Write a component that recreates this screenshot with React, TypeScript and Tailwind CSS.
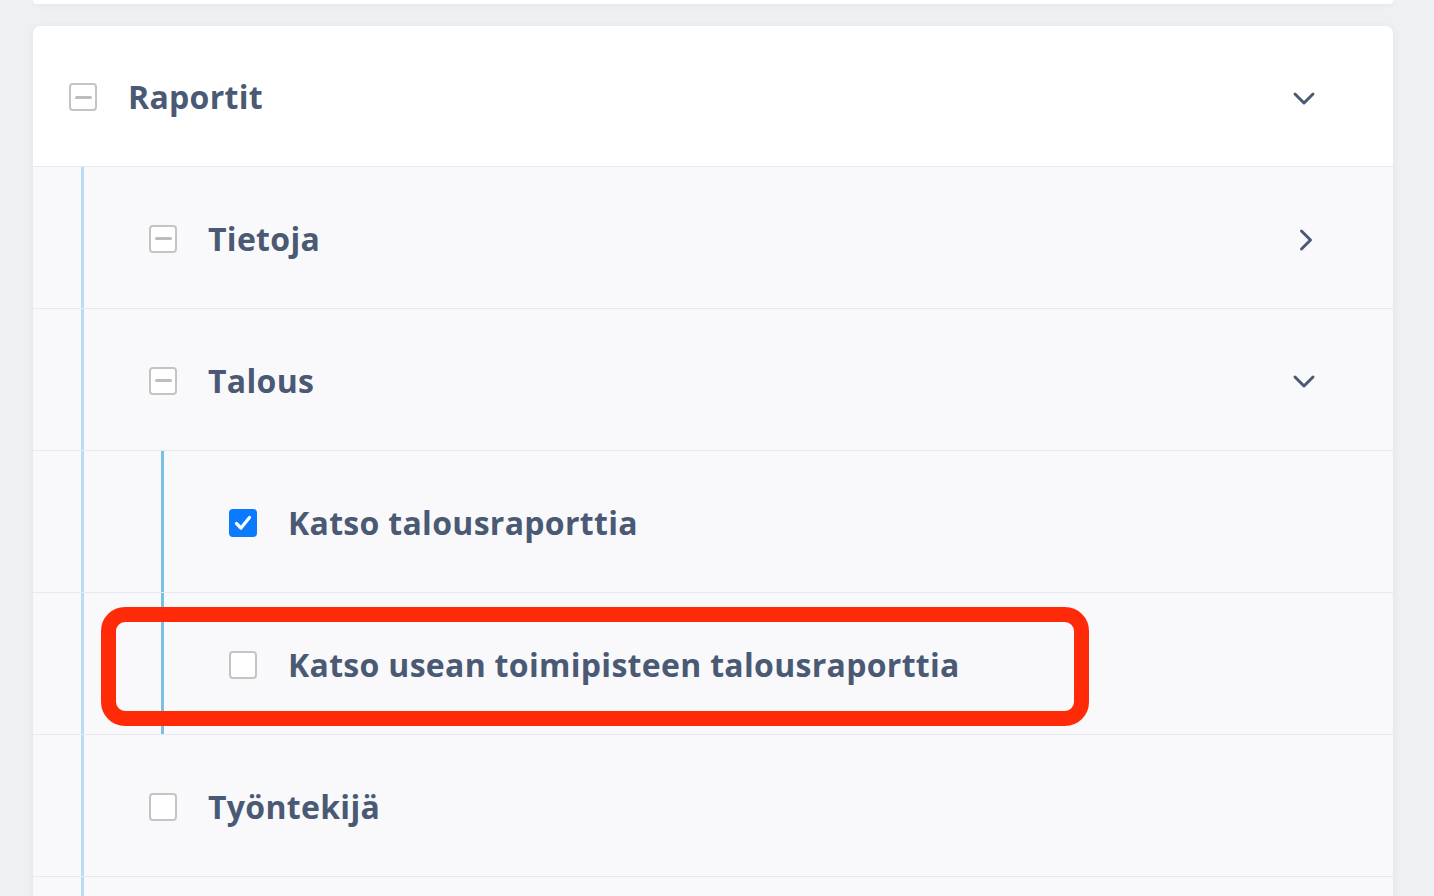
import type { ReactNode } from 'react';

type Check = 'none' | 'checked' | 'partial';

function Box({ state }: { state: Check }) {
  if (state === 'checked') {
    return (
      <div className="w-[28px] h-[28px] shrink-0 rounded-[4px] bg-[#0a7aff] flex items-center justify-center">
        <svg width="20" height="20" viewBox="0 0 20 20" fill="none">
          <path d="M3.5 10.5 L8 15 L16.5 4.5" stroke="#fff" strokeWidth="3.2" strokeLinecap="round" strokeLinejoin="round" />
        </svg>
      </div>
    );
  }
  return (
    <div className="w-[28px] h-[28px] shrink-0 rounded-[4px] border-2 border-[#c4c4c4] bg-white flex items-center justify-center">
      {state === 'partial' && <div className="w-[17px] h-[3px] rounded-full bg-[#bdbdbd]" />}
    </div>
  );
}

function Chevron({ dir }: { dir: 'down' | 'right' }) {
  return (
    <svg width="24" height="24" viewBox="0 0 24 24" fill="none" className="shrink-0 mt-[3px]">
      {dir === 'down' ? (
        <path d="M3 7 L12 16 L21 7" stroke="#4b5a74" strokeWidth="3" strokeLinecap="round" strokeLinejoin="round" />
      ) : (
        <path d="M9.5 3 L18.5 12 L9.5 21" stroke="#4b5a74" strokeWidth="3" strokeLinecap="round" strokeLinejoin="round" />
      )}
    </svg>
  );
}

function Row({
  level,
  state,
  label,
  chevron,
  first,
  children,
}: {
  level: number;
  state: Check;
  label?: string;
  chevron?: 'down' | 'right';
  first?: boolean;
  children?: ReactNode;
}) {
  return (
    <div
      className={`relative flex items-stretch border-b border-[#e6e9ee] ${first ? 'h-[141px] bg-white' : 'h-[142px] bg-[#f9f9fb]'}`}
    >
      {level >= 1 && (
        <>
          <div className="w-[48px] shrink-0" />
          <div className="w-[3px] shrink-0 bg-[#b9ddf2]" />
        </>
      )}
      {level >= 2 && (
        <>
          <div className="w-[77px] shrink-0" />
          <div className="w-[3px] shrink-0 bg-[#7bbfe5]" />
        </>
      )}
      {label && (
        <div className={`flex flex-1 items-center ${level === 0 ? 'pl-[36px]' : 'pl-[65px]'} pr-[77px] pt-[2px]`}>
          <Box state={state} />
          <span
            className="ml-[31px] text-[32px] font-bold tracking-[0.3px] text-[#4b5a74] leading-none"
            style={{ fontFamily: '"Open Sans", sans-serif' }}
          >
            {label}
          </span>
          <div className="flex-1" />
          {chevron && <Chevron dir={chevron} />}
        </div>
      )}
      {children}
    </div>
  );
}

export default function App() {
  return (
    <div className="h-screen overflow-hidden bg-[#eff0f2] px-[33px] pr-[41px]">
      <div className="h-[4px] rounded-b-lg bg-white shadow-[0_1px_6px_rgba(0,0,0,0.06)]" />
      <div className="mt-[22px] rounded-lg bg-white overflow-hidden shadow-[0_1px_8px_rgba(0,0,0,0.06)]">
        <Row level={0} state="partial" label="Raportit" chevron="down" first />
        <Row level={1} state="partial" label="Tietoja" chevron="right" />
        <Row level={1} state="partial" label="Talous" chevron="down" />
        <Row level={2} state="checked" label="Katso talousraporttia" />
        <Row level={2} state="none" label="Katso usean toimipisteen talousraporttia">
          {/* highlight frame */}
          <div className="absolute left-[68px] top-[14px] w-[988px] h-[119px] rounded-[24px] border-[15px] border-[#ff2a08] pointer-events-none" />
        </Row>
        <Row level={1} state="none" label="Työntekijä" />
        <Row level={1} state="none" />
      </div>
    </div>
  );
}
